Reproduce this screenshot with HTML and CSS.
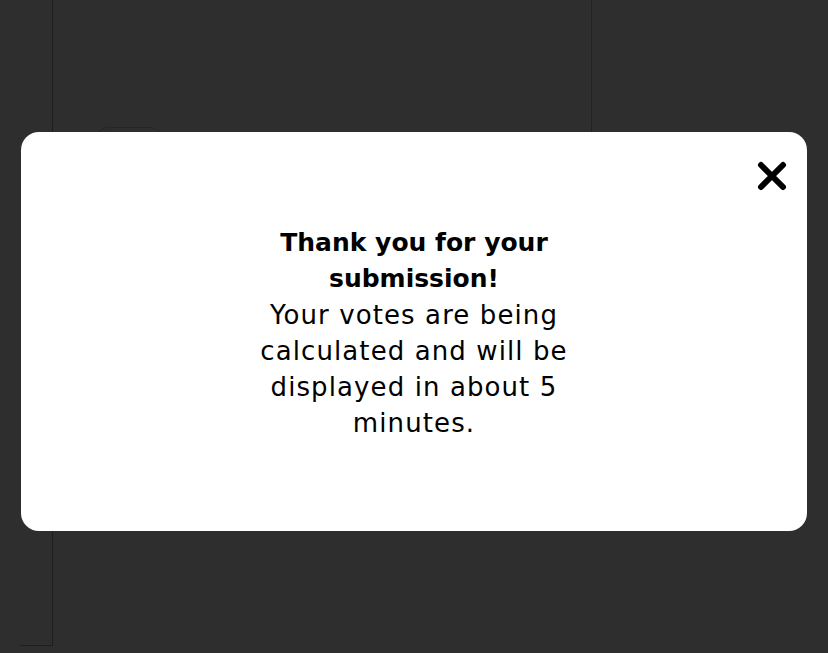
FILE: index.html
```html
<!DOCTYPE html>
<html>
<head>
<meta charset="utf-8">
<link rel="stylesheet" href="styles.css">
</head>
<body>
<div class="page">
  <div class="gutter"></div>
  <div class="main">
    <div class="main-col">
      <div class="ghost-btn"></div>
    </div>
  </div>
</div>
<div class="overlay">
  <div class="modal">
    <button class="close" aria-label="Close">
      <svg width="30" height="30" viewBox="0 0 30 30"><path d="M4 4 L26 26 M26 4 L4 26" stroke="#000" stroke-width="6" stroke-linecap="round"/></svg>
    </button>
    <div class="message">
      <h2 class="title">Thank you for your<br>submission!</h2>
      <p class="body">Your votes are being<br>calculated and will be<br>displayed in about 5<br>minutes.</p>
    </div>
  </div>
</div>
</body>
</html>
```
FILE: styles.css
```css
html, body {
  margin: 0;
  padding: 0;
  background: #2e2e2e;
  width: 828px;
  height: 653px;
  overflow: hidden;
  font-family: "DejaVu Sans", "Noto Sans", sans-serif;
}
.page {
  display: flex;
  height: 653px;
}
.gutter {
  width: 33px;
  margin-left: 20px;
  height: 646px;
  border-right: 1px solid #1e1e1e;
  border-bottom: 1px solid #1e1e1e;
  box-sizing: border-box;
}
.main {
  width: 539px;
  height: 420px;
  border-right: 1px solid #222;
  box-sizing: border-box;
}
.main-col {
  padding: 127px 0 0 43px;
}
.ghost-btn {
  width: 64px;
  height: 40px;
  border: 1px solid #262626;
  border-radius: 12px;
}
.overlay {
  position: fixed;
  inset: 0;
  display: flex;
  align-items: flex-start;
  justify-content: center;
  padding-top: 132px;
}
.modal {
  position: relative;
  width: 786px;
  height: 399px;
  background: #fff;
  border-radius: 18px;
  display: flex;
  align-items: center;
  justify-content: center;
}
.close {
  position: absolute;
  top: 29px;
  right: 20px;
  width: 30px;
  height: 30px;
  padding: 0;
  border: 0;
  background: none;
  display: flex;
}
.message {
  text-align: center;
  color: #000;
  line-height: 36px;
  padding-top: 2px;
}
.title {
  margin: 0;
  font-size: 25px;
  font-weight: 700;
  line-height: 36px;
}
.body {
  margin: 0;
  font-size: 26px;
  font-weight: 400;
  letter-spacing: 1.1px;
}
```
